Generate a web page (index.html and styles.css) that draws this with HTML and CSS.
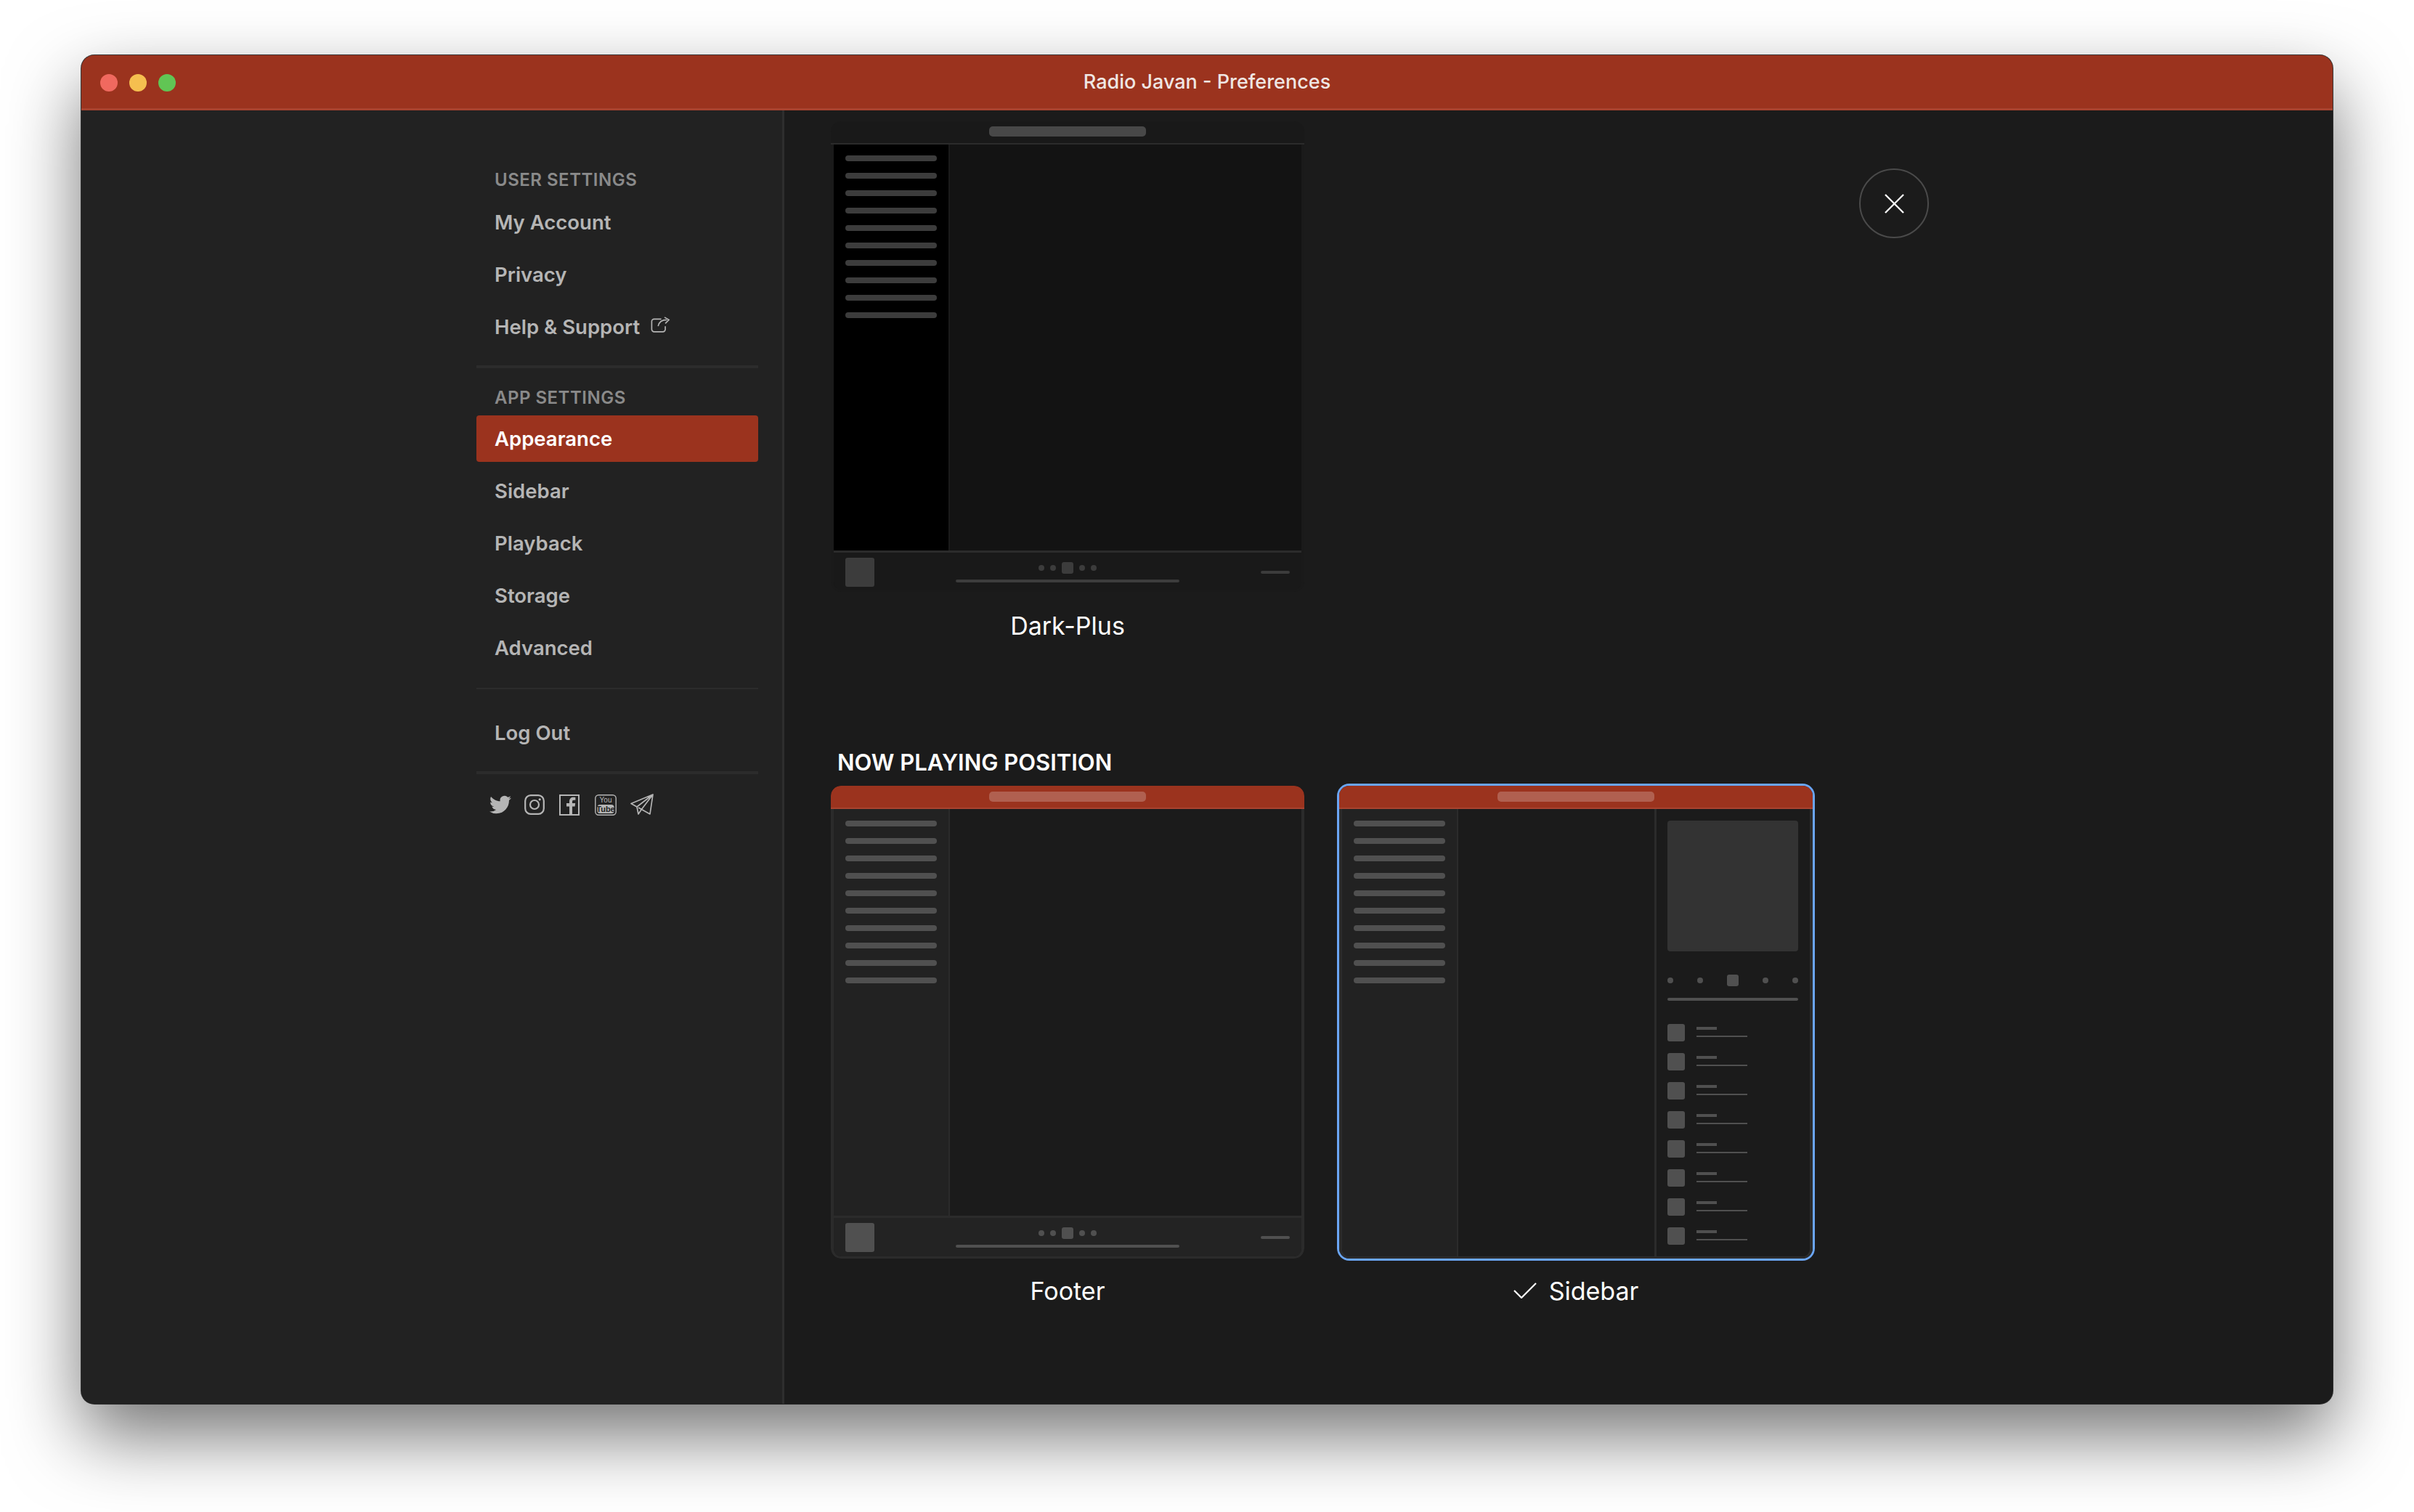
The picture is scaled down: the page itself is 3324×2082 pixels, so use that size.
FILE: index.html
```html
<!DOCTYPE html>
<html lang="en">
<head>
  <meta charset="UTF-8">
  <title>Radio Javan - Preferences</title>
  <link rel="stylesheet" href="styles.css">
</head>
<body>
  <div class="window">
    <header class="titlebar">
      <div class="lights">
        <span class="light red"></span>
        <span class="light yellow"></span>
        <span class="light green"></span>
      </div>
      <div class="title">Radio Javan - Preferences</div>
    </header>

    <div class="main">
      <aside class="sidebar">
        <nav class="nav">
          <h3 class="nav-head">USER SETTINGS</h3>
          <a class="nav-item">My Account</a>
          <a class="nav-item">Privacy</a>
          <a class="nav-item">Help &amp; Support
            <svg class="ext-icon" viewBox="0 0 24 20" fill="none" stroke="currentColor" stroke-width="1.5">
              <path d="M13 3H4a3 3 0 0 0-3 3v10a3 3 0 0 0 3 3h11a3 3 0 0 0 3-3v-4"/>
              <path d="M9 12c1-5 5-8 11-8M17 0.800l5.500 3.200-4.500 4.500"/>
            </svg>
          </a>
          <div class="rule thick first"></div>
          <h3 class="nav-head">APP SETTINGS</h3>
          <a class="nav-item active">Appearance</a>
          <a class="nav-item">Sidebar</a>
          <a class="nav-item">Playback</a>
          <a class="nav-item">Storage</a>
          <a class="nav-item">Advanced</a>
          <div class="rule thin"></div>
          <a class="nav-item logout">Log Out</a>
          <div class="rule thick last"></div>
          <div class="social">
            <svg class="twitter" viewBox="0 0 24 24" fill="currentColor">
              <path d="M23.953 4.57a10 10 0 01-2.825.775 4.958 4.958 0 002.163-2.723c-.951.555-2.005.959-3.127 1.184a4.92 4.92 0 00-8.384 4.482C7.69 8.095 4.067 6.13 1.64 3.162a4.822 4.822 0 00-.666 2.475c0 1.71.87 3.213 2.188 4.096a4.904 4.904 0 01-2.228-.616v.06a4.923 4.923 0 003.946 4.827 4.996 4.996 0 01-2.212.085 4.936 4.936 0 004.604 3.417 9.867 9.867 0 01-6.102 2.105c-.39 0-.779-.023-1.17-.067a13.995 13.995 0 007.557 2.209c9.053 0 13.998-7.496 13.998-13.985 0-.21 0-.42-.015-.63A9.935 9.935 0 0024 4.59z"/>
            </svg>
            <svg class="insta" viewBox="0 0 28 28" fill="none" stroke="currentColor" stroke-width="2.2">
              <rect x="1.2" y="1.2" width="25.6" height="25.6" rx="7.5"/>
              <circle cx="14" cy="14" r="6"/>
              <circle cx="21.2" cy="6.8" r="1.6" fill="currentColor" stroke="none"/>
            </svg>
            <svg class="fb" viewBox="0 0 28 29" fill="none" stroke="currentColor">
              <rect x="1" y="1" width="26" height="27" stroke-width="2"/>
              <path fill="currentColor" stroke="none" d="M14 28V16.500h-4V12h4V9.500c0-4 2.400-5.800 5.500-5.800 1.400 0 2.400.1 2.900.2v3.900h-2.200c-1.700 0-2.200.9-2.200 2.200V12h4.200l-.6 4.500h-3.600V28z"/>
            </svg>
            <svg class="yt" viewBox="0 0 30 29" fill="none" stroke="currentColor">
              <rect x="0.8" y="0.8" width="28.400" height="27.400" rx="4.500" stroke-width="1.400"/>
              <rect x="3.500" y="14" width="23" height="12" rx="3.500" fill="currentColor" stroke="none"/>
              <text class="yt-you" x="15" y="11">You</text>
              <text class="yt-tube" x="15" y="24">Tube</text>
            </svg>
            <svg class="plane" viewBox="0 0 32 30" fill="none" stroke="currentColor" stroke-width="1.700" stroke-linejoin="round">
              <path d="M31 1 1 13.500l8 4.500zM31 1 9 18l2 10 4-6zM31 1l-4 27-16-9"/>
            </svg>
          </div>
        </nav>
      </aside>

      <section class="content">
        <div class="panel">
          <div class="themes">
            <figure class="option">
              <div class="preview dark">
                <div class="pv-top"><span class="pv-pill"></span></div>
                <div class="pv-body">
                  <div class="pv-row">
                    <div class="pv-side">
                      <i></i><i></i><i></i><i></i><i></i><i></i><i></i><i></i><i></i><i></i>
                    </div>
                    <div class="pv-view"></div>
                  </div>
                  <div class="pv-foot">
                    <span class="pv-art"></span>
                    <div class="pv-center">
                      <div class="pv-controls"><b></b><b></b><em></em><b></b><b></b></div>
                      <span class="pv-progress"></span>
                    </div>
                    <span class="pv-volume"></span>
                  </div>
                </div>
              </div>
              <figcaption class="option-name">Dark-Plus</figcaption>
            </figure>
          </div>

          <h2 class="section-title">NOW PLAYING POSITION</h2>
          <div class="themes">
            <figure class="option">
              <div class="preview">
                <div class="pv-top"><span class="pv-pill"></span></div>
                <div class="pv-body">
                  <div class="pv-row">
                    <div class="pv-side">
                      <i></i><i></i><i></i><i></i><i></i><i></i><i></i><i></i><i></i><i></i>
                    </div>
                    <div class="pv-view"></div>
                  </div>
                  <div class="pv-foot">
                    <span class="pv-art"></span>
                    <div class="pv-center">
                      <div class="pv-controls"><b></b><b></b><em></em><b></b><b></b></div>
                      <span class="pv-progress"></span>
                    </div>
                    <span class="pv-volume"></span>
                  </div>
                </div>
              </div>
              <figcaption class="option-name">Footer</figcaption>
            </figure>

            <figure class="option">
              <div class="preview selected">
                <div class="pv-top"><span class="pv-pill"></span></div>
                <div class="pv-body">
                  <div class="pv-row">
                    <div class="pv-side">
                      <i></i><i></i><i></i><i></i><i></i><i></i><i></i><i></i><i></i><i></i>
                    </div>
                    <div class="pv-view"></div>
                    <div class="pv-now">
                      <span class="pv-cover"></span>
                      <div class="pv-controls wide"><b></b><b></b><em></em><b></b><b></b></div>
                      <span class="pv-progress"></span>
                      <div class="pv-queue">
                        <div class="pv-track"><span class="pv-thumb"></span><div class="pv-lines"><u></u><s></s></div></div>
                        <div class="pv-track"><span class="pv-thumb"></span><div class="pv-lines"><u></u><s></s></div></div>
                        <div class="pv-track"><span class="pv-thumb"></span><div class="pv-lines"><u></u><s></s></div></div>
                        <div class="pv-track"><span class="pv-thumb"></span><div class="pv-lines"><u></u><s></s></div></div>
                        <div class="pv-track"><span class="pv-thumb"></span><div class="pv-lines"><u></u><s></s></div></div>
                        <div class="pv-track"><span class="pv-thumb"></span><div class="pv-lines"><u></u><s></s></div></div>
                        <div class="pv-track"><span class="pv-thumb"></span><div class="pv-lines"><u></u><s></s></div></div>
                        <div class="pv-track"><span class="pv-thumb"></span><div class="pv-lines"><u></u><s></s></div></div>
                      </div>
                    </div>
                  </div>
                </div>
              </div>
              <figcaption class="option-name">
                <svg class="check" viewBox="0 0 32 22" fill="none" stroke="currentColor" stroke-width="2.200">
                  <path d="M1 11l10 10L31 1"/>
                </svg>
                Sidebar
              </figcaption>
            </figure>
          </div>
        </div>

        <button class="close" aria-label="Close">
          <svg viewBox="0 0 28 28" fill="none" stroke="currentColor" stroke-width="2.400">
            <path d="M1 1l26 26M27 1L1 27"/>
          </svg>
        </button>
      </section>
    </div>
  </div>
</body>
</html>
```

FILE: styles.css
```css
/* General Styles */
* {
  box-sizing: border-box;
}

html, body {
  height: 100%;
}

body {
  margin: 0;
  padding: 76px 112px 149px;
  background: #fff;
  font-family: Inter, "Noto Sans", sans-serif;
  overflow: hidden;
}

.window {
  height: 100%;
  display: flex;
  flex-direction: column;
  border-radius: 18px;
  overflow: hidden;
  background: #1b1b1b;
  box-shadow: 0 44px 100px rgba(0, 0, 0, 0.55), 0 0 0 1px rgba(0, 0, 0, 0.75);
}

/* Title Bar */
.titlebar {
  flex: none;
  height: 76px;
  display: flex;
  align-items: center;
  position: relative;
  background: #9b331e;
  border-bottom: 3px solid #a8432f;
}

.lights {
  display: flex;
  gap: 16px;
  padding: 2px 0 0 26px;
}

.light {
  width: 24px;
  height: 24px;
  border-radius: 50%;
}

.red { background: #f0695f; }
.yellow { background: #f5bf4f; }
.green { background: #61c554; }

.title {
  position: absolute;
  left: 0;
  right: 0;
  text-align: center;
  font-size: 27px;
  font-weight: 500;
  color: #efe6e3;
}

.main {
  flex: 1;
  display: flex;
  min-height: 0;
}

/* Sidebar */
.sidebar {
  flex: none;
  width: 968px;
  display: flex;
  justify-content: flex-end;
  padding-right: 33px;
  background: #222;
  border-right: 3px solid #2e2e2e;
}

.nav {
  width: 388px;
  padding-top: 78px;
}

.nav-head {
  height: 36px;
  line-height: 36px;
  margin: 0 0 8px;
  padding-left: 25px;
  font-size: 24px;
  font-weight: 600;
  letter-spacing: 0.5px;
  color: #8a8a8a;
}

.rule.first + .nav-head {
  margin-bottom: 6px;
}

.nav-item {
  height: 64px;
  margin-bottom: 8px;
  padding-left: 25px;
  display: flex;
  align-items: center;
  border-radius: 4px;
  font-size: 27.5px;
  font-weight: 600;
  color: #b5b5b5;
}

.nav-item.active {
  background: #9b331e;
  color: #fff;
}

.ext-icon {
  width: 29px;
  height: 22px;
  margin: -6px 0 0 14px;
}

.rule.thick {
  height: 4px;
  background: #2c2c2c;
}

.rule.thin {
  height: 2px;
  margin: 23px 0 28px;
  background: #2c2c2c;
}

.rule.first {
  margin: 21px 0 23px;
}

.rule.last {
  margin: 21px 0 27px;
}

.social {
  display: flex;
  align-items: center;
  color: #b5b5b5;
  height: 30px;
  padding-left: 18px;
}

.twitter { width: 30px; height: 30px; }
.insta { width: 28px; height: 28px; margin-left: 18px; }
.fb { width: 28px; height: 29px; margin-left: 20px; }
.yt { width: 30px; height: 29px; margin-left: 21px; }
.plane { width: 32px; height: 30px; margin-left: 19px; }

.yt-you, .yt-tube {
  font-family: "Liberation Sans", sans-serif;
  text-anchor: middle;
  stroke: none;
}

.yt-you {
  font-size: 10px;
  fill: #b5b5b5;
}

.yt-tube {
  font-size: 11px;
  font-weight: 700;
  fill: #222;
}

/* Content */
.content {
  flex: 1;
  display: flex;
  padding: 15px 0 0 64px;
}

.panel {
  width: 1352px;
}

.themes {
  display: grid;
  grid-template-columns: 652px 652px;
  gap: 48px;
}

.option {
  margin: 0;
}

.option-name {
  height: 44px;
  margin-top: 22px;
  display: flex;
  align-items: center;
  justify-content: center;
  font-size: 34px;
  color: #fff;
}

.dark + .option-name {
  margin-top: 24px;
}

.check {
  width: 32px;
  height: 22px;
  margin-right: 17px;
}

.section-title {
  height: 38px;
  line-height: 38px;
  margin: 148px 0 13px;
  padding-left: 9px;
  font-size: 31px;
  font-weight: 600;
  color: #fff;
}

.close {
  width: 96px;
  height: 96px;
  margin: 65px 0 0 64px;
  padding: 0;
  display: flex;
  align-items: center;
  justify-content: center;
  background: none;
  border: 2px solid #4a4a4a;
  border-radius: 50%;
  color: #fff;
}

.close svg {
  width: 27px;
  height: 27px;
}

/* Theme Previews */
.preview {
  --top: #9b331e;
  --pill: #b06050;
  --side: #222;
  --view: #1b1b1b;
  --foot: #232323;
  --line: #505050;
  --edge: #2b2b2b;
  --foot-h: 56px;
  height: 651px;
  display: flex;
  flex-direction: column;
  border-radius: 14px;
  overflow: hidden;
}

.preview.dark {
  --top: #191919;
  --pill: #484848;
  --side: #000;
  --view: #131313;
  --foot: #191919;
  --line: #3c3c3c;
  --edge: #1a1a1a;
  --foot-h: 54px;
  height: 648px;
}

.preview.selected {
  overflow: visible;
  box-shadow: 0 0 0 3px #6aa5f5;
}

.pv-top {
  flex: none;
  height: 32px;
  display: flex;
  justify-content: center;
  padding-top: 8px;
  background: var(--top);
  border-bottom: 2px solid #a8432f;
  border-radius: 14px 14px 0 0;
}

.dark .pv-top {
  padding-top: 7px;
  border-bottom-color: #2b2b2b;
}

.pv-pill {
  width: 216px;
  height: 14px;
  border-radius: 5px;
  background: var(--pill);
}

.pv-body {
  flex: 1;
  min-height: 0;
  display: flex;
  flex-direction: column;
  border: 4px solid var(--edge);
  border-top: 0;
  border-bottom-width: 3px;
  border-radius: 0 0 14px 14px;
  overflow: hidden;
}

.pv-row {
  flex: 1;
  min-height: 0;
  display: flex;
}

.pv-side {
  flex: none;
  width: 160px;
  padding: 16px 0 0 16px;
  display: flex;
  flex-direction: column;
  gap: 16px;
  background: var(--side);
  border-right: 2px solid var(--edge);
}

.dark .pv-side {
  padding-top: 15px;
}

.pv-side i {
  width: 126px;
  height: 8px;
  border-radius: 4px;
  background: var(--line);
}

.pv-view {
  flex: 1;
  background: var(--view);
}

.pv-foot {
  flex: none;
  height: var(--foot-h);
  padding: 7px 16px 0;
  display: flex;
  align-items: flex-start;
  justify-content: space-between;
  background: var(--foot);
  border-top: 3px solid #2b2b2b;
}

.pv-art {
  width: 40px;
  height: 40px;
  border-radius: 3px;
  background: var(--line);
}

.pv-center {
  width: 308px;
  display: flex;
  flex-direction: column;
  align-items: center;
  gap: 8px;
  padding-top: 6px;
}

.pv-controls {
  display: flex;
  align-items: center;
  gap: 8px;
}

.pv-controls b {
  width: 8px;
  height: 8px;
  border-radius: 50%;
  background: var(--line);
}

.pv-controls em {
  width: 16px;
  height: 16px;
  border-radius: 3px;
  background: var(--line);
}

.pv-progress {
  display: block;
  width: 100%;
  height: 4px;
  border-radius: 2px;
  background: var(--line);
}

.pv-volume {
  width: 40px;
  height: 4px;
  margin-top: 18px;
  border-radius: 2px;
  background: var(--line);
}

/* Sidebar style now playing */
.pv-now {
  flex: none;
  width: 214px;
  padding: 16px 16px 0 15px;
  background: var(--view);
  border-left: 3px solid var(--edge);
}

.pv-cover {
  display: block;
  width: 180px;
  height: 180px;
  border-radius: 4px;
  background: #333;
}

.pv-controls.wide {
  justify-content: space-between;
  gap: 0;
  margin: 32px 0 16px;
}

.pv-queue {
  margin-top: 32px;
  display: flex;
  flex-direction: column;
  gap: 16px;
}

.pv-track {
  display: flex;
  gap: 16px;
}

.pv-thumb {
  width: 24px;
  height: 24px;
  border-radius: 3px;
  background: var(--line);
}

.pv-lines {
  padding-top: 4px;
}

.pv-lines u {
  display: block;
  width: 28px;
  height: 4px;
  margin-bottom: 8px;
  background: var(--line);
}

.pv-lines s {
  display: block;
  width: 70px;
  height: 2px;
  background: var(--line);
}
```
